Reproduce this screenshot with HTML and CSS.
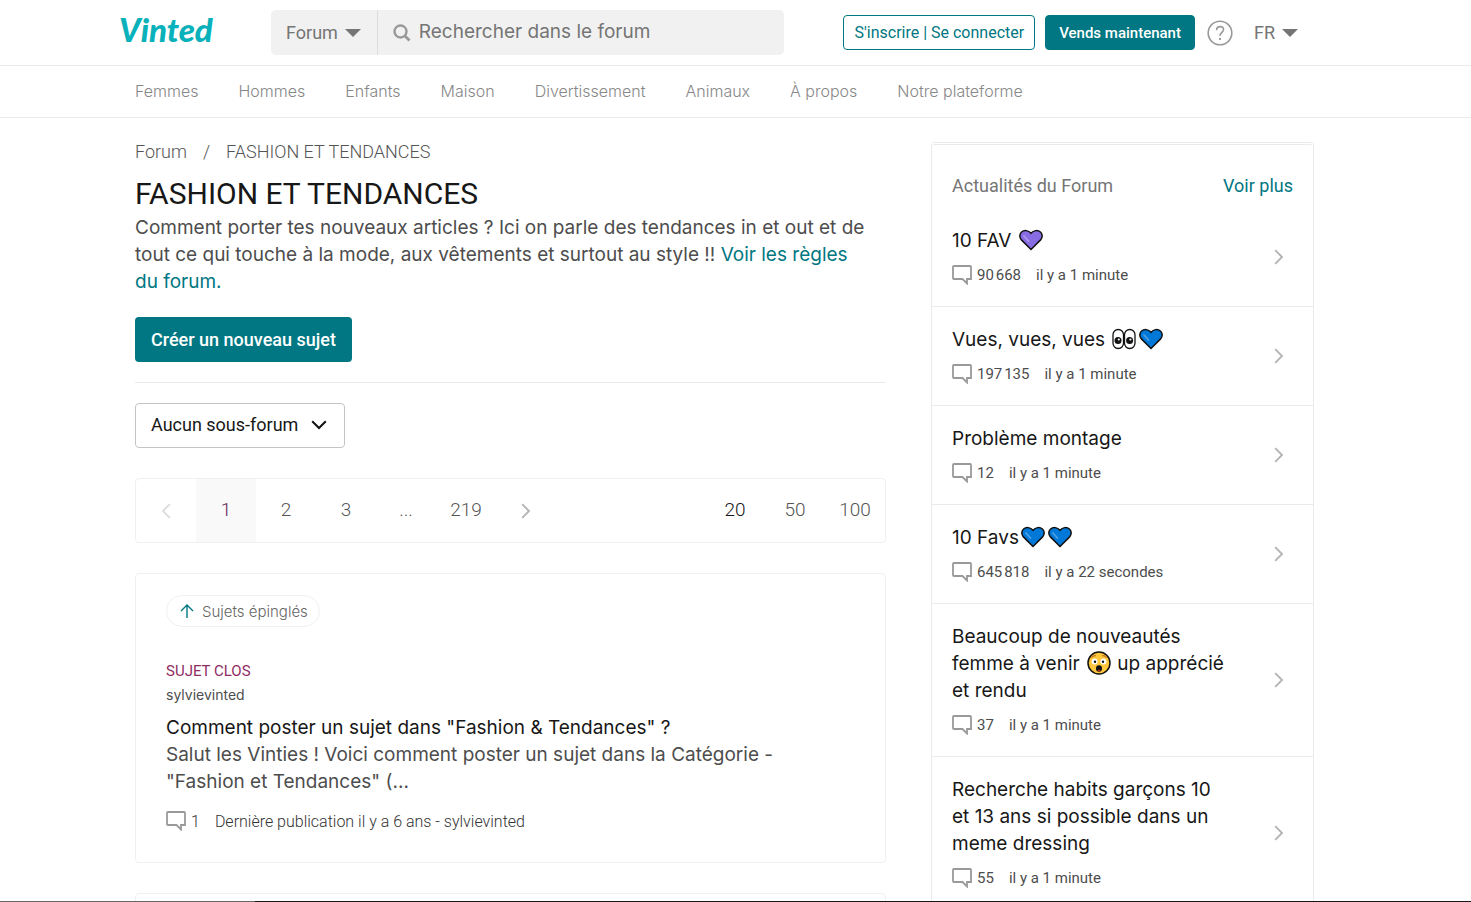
FILE: index.html
```html
<!DOCTYPE html>
<html lang="fr">
<head>
<meta charset="utf-8">
<title>Fashion et tendances - Forum Vinted</title>
<link rel="stylesheet" href="styles.css">
</head>
<body>
<svg class="sprite" aria-hidden="true">
  <symbol id="bubble" viewBox="0 0 20 20"><path d="M2 1H18a1 1 0 0 1 1 1V14H15V18.500L10.500 14H2a1 1 0 0 1-1-1V2a1 1 0 0 1 1-1Z" fill="none" stroke="#999" stroke-width="1.800"/></symbol>
  <symbol id="next" viewBox="0 0 10 16"><path d="M1.200 1.200 8 8l-6.800 6.800" fill="none" stroke="currentColor" stroke-width="1.900"/></symbol>
  <symbol id="prev" viewBox="0 0 10 16"><path d="M8.800 1.200 2 8l6.800 6.800" fill="none" stroke="currentColor" stroke-width="1.900"/></symbol>
  <symbol id="caret" viewBox="0 0 16 8"><path d="M0 0H16L8 8Z" fill="#757575"/></symbol>
  <symbol id="heart" viewBox="0 0 24 21"><path d="M12 20 2.400 10.400C0 7.800.6 4.200 2.600 2.500 5.200.3 9.400.6 12 3.800 14.600.6 18.800.3 21.400 2.500 23.400 4.200 24 7.800 21.600 10.400Z" fill="currentColor" stroke="#111" stroke-width="1.500"/><path d="M5 6.500l4.500 5" stroke="#fff" stroke-opacity=".3" stroke-width="1.800" stroke-linecap="round"/></symbol>
  <symbol id="eyes" viewBox="0 0 24 21"><rect x="1" y="1" width="10.500" height="19" rx="5.200" fill="#fff" stroke="#111" stroke-width="1.300"/><rect x="12.500" y="1" width="10.500" height="19" rx="5.200" fill="#fff" stroke="#111" stroke-width="1.300"/><circle cx="6" cy="12" r="3.500" fill="#111"/><circle cx="17.600" cy="12" r="3.500" fill="#111"/><circle cx="6.800" cy="11" r="1.100" fill="#fff"/><circle cx="18.400" cy="11" r="1.100" fill="#fff"/></symbol>
  <symbol id="face" viewBox="0 0 24 24"><circle cx="12" cy="12" r="11" fill="#ffc83d" stroke="#111" stroke-width="1.500"/><circle cx="7.600" cy="10.500" r="3" fill="#fff"/><circle cx="16.400" cy="10.500" r="3" fill="#fff"/><circle cx="8" cy="10.700" r="1.200" fill="#111"/><circle cx="16" cy="10.700" r="1.200" fill="#111"/><path d="M4.500 6.500Q6.500 4.200 9 4.800M15 4.800Q17.500 4.200 19.500 6.500" fill="none" stroke="#c47a1d" stroke-width="1.200"/><ellipse cx="12" cy="17.500" rx="3" ry="3.300" fill="#111"/><path d="M10.200 19.500Q12 17.500 13.800 19.500 12 21.300 10.200 19.500Z" fill="#b3261e"/></symbol>
</svg>

<header class="bar">
  <div class="wrap top">
    <a class="logo" href="#" aria-label="Vinted"><svg width="96" height="46" viewBox="0 0 96 46"><text x="0" y="37">Vinted</text></svg></a>
    <form class="search">
      <button type="button" class="scope">Forum <svg width="16" height="8"><use href="#caret"/></svg></button>
      <label class="field">
        <svg width="18" height="18" viewBox="0 0 18 18"><circle cx="7.500" cy="7.500" r="6" fill="none" stroke="#999" stroke-width="2.400"/><path d="M12 12l4.500 4.500" stroke="#999" stroke-width="2.800"/></svg>
        <input type="search" placeholder="Rechercher dans le forum" aria-label="Rechercher dans le forum">
      </label>
    </form>
    <div class="actions">
      <a class="btn-small outline" href="#">S'inscrire | Se connecter</a>
      <a class="btn-small solid" href="#">Vends maintenant</a>
      <a class="help" href="#" aria-label="Aide"><svg width="26" height="26" viewBox="0 0 26 26" fill="none" stroke="#999"><circle cx="13" cy="13" r="11.800" stroke-width="1.600"/><path d="M9.600 10.200C9.600 7.900 11.100 6.600 13.100 6.600S16.500 7.900 16.500 9.800C16.500 12.300 13 12.700 13 15.800" stroke-width="1.600"/><path d="M13 18v2" stroke-width="1.900"/></svg></a>
      <button type="button" class="lang">FR <svg width="16" height="8"><use href="#caret"/></svg></button>
    </div>
  </div>
</header>
<nav class="bar">
  <div class="wrap links">
    <a href="#">Femmes</a><a href="#">Hommes</a><a href="#">Enfants</a><a href="#">Maison</a><a href="#">Divertissement</a><a href="#">Animaux</a><a href="#">À propos</a><a href="#">Notre plateforme</a>
  </div>
</nav>

<div class="gutter">
<div class="wrap page">
  <main>
    <div class="crumbs"><a href="#">Forum</a><span>/</span><a href="#">FASHION ET TENDANCES</a></div>
    <h1>FASHION ET TENDANCES</h1>
    <p class="intro">Comment porter tes nouveaux articles ? Ici on parle des tendances in et out et de tout ce qui touche à la mode, aux vêtements et surtout au style !! <a href="#">Voir les règles du forum.</a></p>
    <div class="create"><a class="btn" href="#">Créer un nouveau sujet</a></div>
    <button type="button" class="subforum">Aucun sous-forum <svg width="16" height="10" viewBox="0 0 16 10"><path d="M1.200 1.200 8 8l6.800-6.800" fill="none" stroke="#111" stroke-width="2"/></svg></button>
    <div class="pager">
      <a class="off" href="#" aria-label="Précédent"><svg width="10" height="16"><use href="#prev"/></svg></a>
      <a class="current" href="#">1</a><a href="#">2</a><a href="#">3</a><span>...</span><a href="#">219</a>
      <a class="arrow" href="#" aria-label="Suivant"><svg width="10" height="16"><use href="#next"/></svg></a>
      <a class="size on" href="#">20</a><a href="#">50</a><a href="#">100</a>
    </div>
    <article class="card">
      <div class="pin"><svg width="14" height="14" viewBox="0 0 14 14" fill="none" stroke="#007782" stroke-width="1.400"><path d="M7 14V1M1 7l6-6 6 6"/></svg>Sujets épinglés</div>
      <div class="closed">SUJET CLOS</div>
      <div class="author">sylvievinted</div>
      <h2><a href="#">Comment poster un sujet dans "Fashion &amp; Tendances" ?</a></h2>
      <p>Salut les Vinties ! Voici comment poster un sujet dans la Catégorie - "Fashion et Tendances" (...</p>
      <div class="meta"><svg width="20" height="20"><use href="#bubble"/></svg><span>1</span><span>Dernière publication il y a 6 ans - sylvievinted</span></div>
    </article>
    <article class="card"></article>
  </main>

  <aside class="news">
    <div class="news-head"><span>Actualités du Forum</span><a href="#">Voir plus</a></div>
    <a class="item" href="#"><div><h3>10 FAV <svg class="emoji violet"><use href="#heart"/></svg></h3><div class="meta"><svg width="20" height="20"><use href="#bubble"/></svg><span>90&#8239;668</span><span>il y a 1 minute</span></div></div><svg class="go"><use href="#next"/></svg></a>
    <a class="item" href="#"><div><h3>Vues, vues, vues <svg class="emoji"><use href="#eyes"/></svg><svg class="emoji blue"><use href="#heart"/></svg></h3><div class="meta"><svg width="20" height="20"><use href="#bubble"/></svg><span>197&#8239;135</span><span>il y a 1 minute</span></div></div><svg class="go"><use href="#next"/></svg></a>
    <a class="item" href="#"><div><h3>Problème montage</h3><div class="meta"><svg width="20" height="20"><use href="#bubble"/></svg><span>12</span><span>il y a 1 minute</span></div></div><svg class="go"><use href="#next"/></svg></a>
    <a class="item" href="#"><div><h3>10 Favs<svg class="emoji blue"><use href="#heart"/></svg><svg class="emoji blue"><use href="#heart"/></svg></h3><div class="meta"><svg width="20" height="20"><use href="#bubble"/></svg><span>645&#8239;818</span><span>il y a 22 secondes</span></div></div><svg class="go"><use href="#next"/></svg></a>
    <a class="item" href="#"><div><h3>Beaucoup de nouveautés femme à venir <svg class="emoji"><use href="#face"/></svg> up apprécié et rendu</h3><div class="meta"><svg width="20" height="20"><use href="#bubble"/></svg><span>37</span><span>il y a 1 minute</span></div></div><svg class="go"><use href="#next"/></svg></a>
    <a class="item" href="#"><div><h3>Recherche habits garçons 10 et 13 ans si possible dans un meme dressing</h3><div class="meta"><svg width="20" height="20"><use href="#bubble"/></svg><span>55</span><span>il y a 1 minute</span></div></div><svg class="go"><use href="#next"/></svg></a>
  </aside>
</div>
</div>
<div class="edge"></div>
</body>
</html>
```
FILE: styles.css
```css
* { box-sizing: border-box; }
html { height: 100%; }
body {
  margin: 0;
  height: 100%;
  overflow: hidden;
  font: 19px/27px Inter, Roboto, "Liberation Sans", sans-serif;
  color: #4d4d4d;
  background: #fff;
}
a { color: inherit; text-decoration: none; }
button { font: inherit; color: inherit; cursor: pointer; }
h1, h2, h3, p { margin: 0; font-size: 19px; line-height: 27px; font-weight: 400; }
svg { flex: none; }
.sprite { position: absolute; width: 0; height: 0; }

.bar { border-bottom: 1px solid #ebebeb; padding-right: 22px; }
.gutter { padding-right: 22px; }
.wrap { max-width: 1179px; margin: 0 auto; }

.top { display: flex; align-items: center; height: 65px; }
.logo { display: block; margin-left: -16px; height: 46px; margin-bottom: 10px; }
.logo text { font: italic 900 33px Lato, sans-serif; fill: #09b1ba; }
.search {
  display: flex;
  flex: 0 1 513px;
  height: 45px;
  margin-left: 56px;
  border-radius: 5px;
  background: #f1f1f1;
  overflow: hidden;
}
.scope, .lang, .crumbs, .btn-small, .btn, .pager, h1, .subforum, .news-head, .meta, .closed {
  font-family: Roboto, "Liberation Sans", sans-serif;
}
.scope {
  display: flex;
  align-items: center;
  gap: 7px;
  padding: 0 16px 0 15px;
  border: 0;
  border-right: 1px solid #ddd;
  background: none;
  font-size: 18px;
  color: #757575;
}
.field { display: flex; flex: 1; align-items: center; gap: 8px; padding-left: 15px; }
.field input {
  flex: 1;
  min-width: 0;
  padding: 0 0 3px;
  border: 0;
  background: none;
  font: inherit;
  outline: 0;
}
.field input::placeholder { color: #757575; opacity: 1; }
.actions { display: flex; align-items: center; gap: 10px; margin-left: auto; margin-right: 16px; }
.btn-small {
  height: 35px;
  padding: 0 10px;
  border: 1px solid #007782;
  border-radius: 4px;
  font-size: 16px;
  line-height: 34px;
  white-space: nowrap;
  color: #007782;
}
.solid { padding: 0 13px; background: #007782; color: #fff; font-size: 15px; font-weight: 500; }
.help { display: flex; margin-left: 2px; }
.lang {
  display: flex;
  align-items: center;
  gap: 7px;
  margin-left: 11px;
  padding: 0;
  border: 0;
  background: none;
  font-size: 18px;
  color: #757575;
}
.links { display: flex; align-items: center; gap: 40px; height: 51px; padding-bottom: 1px; font-size: 16px; font-weight: 300; color: #888; white-space: nowrap; }

.page {
  display: grid;
  grid-template-columns: 751fr 383fr;
  gap: 45px;
  align-items: start;
  padding-top: 24px;
}
.crumbs { display: flex; gap: 16px; line-height: 20px; font-size: 18px; font-weight: 300; color: #555; }
h1 { margin-top: 13px; font-size: 30px; line-height: 38px; color: #171717; }
.intro { margin-top: 1px; padding-right: 16px; }
.intro a { color: #007782; }
.create { padding: 22px 0 20px; border-bottom: 1px solid #ebebeb; }
.btn {
  display: inline-block;
  height: 45px;
  padding: 0 16px;
  border-radius: 4px;
  background: #007782;
  font-size: 18px;
  font-weight: 500;
  line-height: 45px;
  vertical-align: top;
  color: #fff;
}
.subforum {
  display: flex;
  align-items: center;
  gap: 13px;
  height: 45px;
  margin: 20px 0 30px;
  padding: 0 17px 2px 15px;
  border: 1px solid #c4c4c4;
  border-radius: 4px;
  background: #fff;
  font-size: 18px;
  color: #171717;
}
.pager { display: flex; height: 65px; border: 1px solid #f0f0f0; border-radius: 4px; font-size: 19px; font-weight: 300; color: #555; }
.pager > * { display: flex; align-items: center; justify-content: center; width: 60px; padding-bottom: 2px; }
.pager .off { color: #ddd; padding: 0; }
.pager .arrow { color: #b5b5b5; padding: 0; }
.pager .current { background: #f9f9f9; color: #5f1f58; }
.pager .size { margin-left: auto; }
.pager .on { color: #171717; }
.card { min-height: 60px; margin-top: 30px; padding: 21px 30px 30px; border: 1px solid #f0f0f0; border-radius: 4px; }
.pin {
  display: inline-flex;
  align-items: center;
  gap: 8px;
  height: 32px;
  padding: 0 11px 0 13px;
  border: 1px solid #f0f0f0;
  border-radius: 16px;
  font-size: 15px;
  font-weight: 300;
  color: #666;
  vertical-align: top;
}
.closed { margin-top: 33px; font-size: 15px; line-height: 23px; color: #8f2d64; }
.author { margin-bottom: 8px; font-size: 14px; line-height: 23px; }
.card h2, .item h3 { color: #171717; }
.card p { padding-right: 30px; }
.meta { display: flex; align-items: center; gap: 15px; height: 22px; font-size: 15px; }
.meta svg { margin-right: -10px; }
.card .meta { margin-top: 15px; font-size: 16px; font-weight: 300; color: #333; }

.news { border: 1px solid #ebebeb; border-top: 3px double #ebebeb; border-radius: 4px; }
.news-head { display: flex; justify-content: space-between; padding: 27px 20px 9px; font-size: 18px; color: #757575; }
.news-head a { color: #007782; }
.item { display: flex; align-items: center; padding: 19px 29px 20px 20px; border-bottom: 1px solid #ebebeb; }
.item > div { flex: 1; padding-right: 42px; }
.item .meta { margin-top: 10px; }
.go { width: 10px; height: 16px; color: #b5b5b5; }
.emoji { width: 24px; height: 24px; margin: 0 1px 0 2px; vertical-align: -5px; }
.violet { color: #886ce4; }
.blue { color: #0078d7; }
.edge { position: fixed; left: 0; right: 0; bottom: 0; height: 1px; background: linear-gradient(90deg, #666 255px, #171717 255px); }
```
